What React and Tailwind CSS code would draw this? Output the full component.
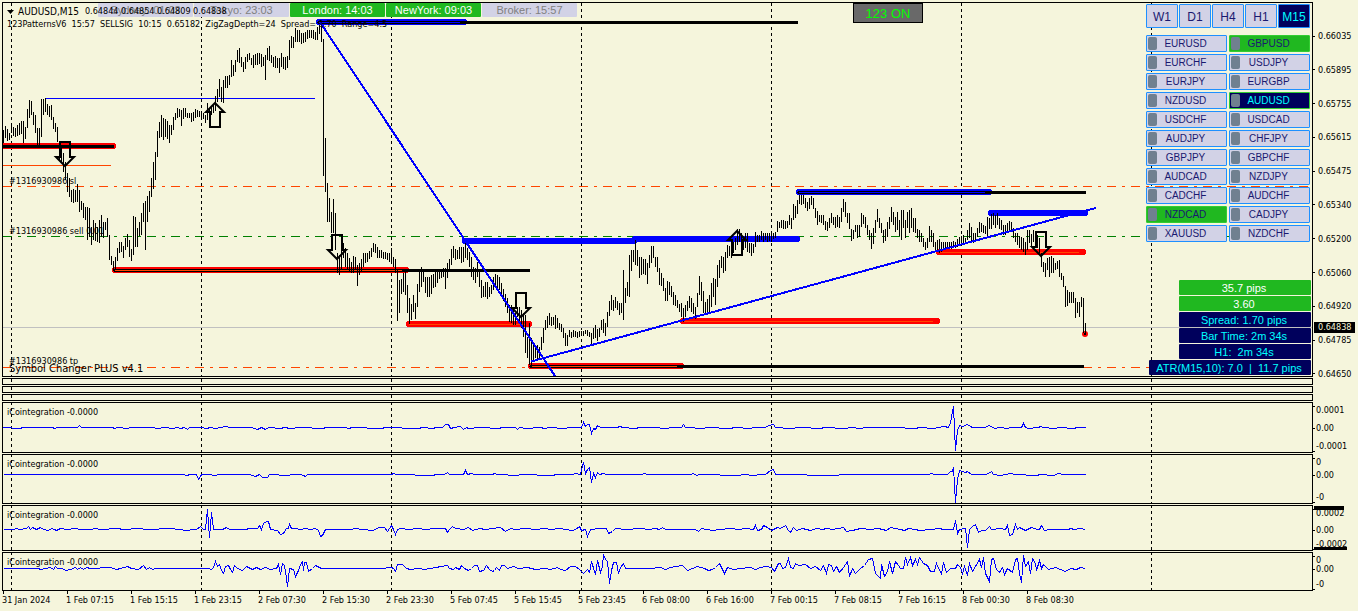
import React from "react";

const UI = "font-['DejaVu_Sans_Condensed','DejaVu_Sans',sans-serif]";
const BTN = "font-['Liberation_Sans',sans-serif]";

// Each run of bars starts at x and advances 2px a bar; v holds high,low pairs scaled by k below y0.
const RUNS = [
  {
    x: 3, y0: 0, k: 1,
    v: [130,143,126,138,129,141,133,140,124,133,127,136,128,137,125,136,123,135,121,134,121,143,127,139,109,128,100,118,101,115,112,125,115,133,128,145,128,146,99,137,99,115,98,112,104,115,106,117,105,120,117,129,123,132,127,142,142,160,147,162,153,172,162,180,173,192,178,197,190,202,189,203,190,202,184,202,190,212,201,210,203,218,207,220,207,240,208,237,227,245,220,240,223,241,227,242,220,243,215,237,222,238,222,230,218,237,235,260,256,265,261,270,257,270,248,261,242,253,242,252,246,258,238,250,234,247,240,257,249,261,216,255,217,247,228,247,222,236,213,235,203,222,201,250,196,222,191,212,178,197,162,189,152,180,131,157,122,138,115,137,118,140,119,137,121,139,125,143,125,135,117,130,113,120,108,118,109,117,110,126,108,119,108,117,113,118,113,118,113,122,112,121,109,118,110,117,111,117,113,118,113,119,115,123,103,120,108,117,107,115,105,113,96,111,89,102,79,97,87,102,80,103,76,88,76,88,75,85,60,77,65,76,60,72,50,62,48,63,57,67,62,72,57,69,54,62,53,60,58,65,55,68,54,65,53,65,53,64,54,67,57,66,55,80,48,60,46,61,55,63,57,67,56,68,58,68,58,73,53,67,57,69,57,70,56,68,40,60,36,48,37,48,28,42,30,42,30,42,33,44,33,43,32,42,30,39,30,38,30,38,30,39,32,40,27,40,25,34,27,42,39,176,138,192],
  },
  {
    x: 327, y0: 190, k: 1 / 3,
    v: [-20,97,25,97,67,130,28,130,68,180,190,250,195,255,150,240,160,205,175,230,190,238,205,245,215,250,197,248,200,240,225,288,220,255,207,245,190,232,190,220,188,215,183,207,175,200,158,187,162,190,172,205,180,205,180,203,187,207,187,207,190,210,188,215,175,222,200,230,207,250,240,393,270,370,267,313,250,305,240,315,285,370,325,403,343,390,315,365,340,387,283,350,245,307,230,290,240,275,260,310,262,320,262,320,255,313,252,293,245,290,240,280,245,267,240,265,235,262,235,297,220,263,208,245,177,225,167,205,178,210,180,208,170,208,170,220,170,215,155,205,175,210,185,230,200,262,230,270,235,280,215,262,245,290,270,323,287,320,275,320,275,328,290,320,285,312,262,300,252,290,255,297,262,300,280,320,297,333,312,350,325,370,345,395,345,400,350,405,370,405,350,380,350,395,360,415,370,440,375,490,440,503,400,525,445,530,465,513,470,505,465,510,470,503,440,480,415,458,390,420,377,413,368,405,382,408,380,405,375,418,383,415,400,420,403,425,415,445,430,468,435,467,420,440,425,445,420,440,422,440,425,445,422,442,422,435,422,437,420,433,420,437,427,440,430,465,415,447,405,445,418,453,415,440,390,420,388,430,400,437,365,410,333,377,315,360,330,362,322,355,332,360,340,375,338,370,240,390,293,340,277,317,195,320,180,243,180,215,150,225,180,228],
  },
  {
    x: 639, y0: 170, k: 1 / 3,
    v: [260,325,262,315,267,312,268,315,280,342,255,295,228,280,228,265,262,290,262,305,293,345,308,347,325,362,355,392,333,392,335,375,347,380,367,405,375,408,390,413,402,425,400,440,413,455,405,440,393,423,378,413,383,425,400,432,412,448,370,410,318,375,335,392,362,428,397,430,388,432,375,425,338,410,323,380,328,405,285,350,270,325,258,295,260,308,247,303,225,265,228,258,225,263,215,248,205,240,178,225,178,215,190,228,200,240,190,235,190,245,220,250,220,257,222,250,187,230,195,217,195,215,183,210,190,215,188,210,190,215,190,213,190,215,190,208,187,205,153,187,155,175,150,175,150,177,153,178,152,175,135,165,145,178,103,150,108,145,90,133,75,102,75,105,75,102,85,113,97,123,85,117,78,105,85,118,115,145,123,165,135,155,135,160,135,165,153,180,155,182,145,175,130,160,140,165,142,175,135,170,140,175,115,155,87,125,95,140,130,160,130,178,177,213,180,208,165,187,165,203,165,200,130,170,135,162,140,175,165,195,180,210,190,237,175,222,150,190,117,155,145,175,160,190,180,220,177,213,155,200,140,178,110,155,125,165,140,185,125,180,150,197,120,210,120,175,150,205,125,175,120,190,115,175,145,185,145,190,177,205,180,215,190,215,205,230,215,240,205,235,168,215,180,217,190,230,215,245,210,245,208,250,215,245,215,240,215,240,215,235,215,235,215,238,213,235,215,235,208,230,200,225,198,222,195,225,205,220,180,210,160,205,170,215,190,220,190,210,175,200],
  },
  {
    x: 979, y0: 170, k: 1 / 3,
    v: [155,190,160,185,165,190,168,192,140,203,143,178,133,178,130,165,135,175,130,165,143,178,150,180,165,195,165,195,160,187,153,180,155,185,175,205,190,215,190,225,197,235,200,240,205,245,215,255,180,240,180,220,193,232,180,215,185,230,195,235,205,250,250,290,275,305,280,320,265,300,262,320,258,310,265,310,278,300,272,297,270,320,308,330,317,350,347,410,360,408,365,400,365,398,365,400,385,445,395,430,395,440,380,410,383,490,460,490],
  },
];

const barPath = RUNS.map((r) => {
  let d = "";
  for (let i = 0; i < r.v.length; i += 2) {
    const hi = Math.round(r.y0 + r.v[i] * r.k);
    const lo = Math.round(r.y0 + r.v[i + 1] * r.k);
    d += `M${r.x + i + 0.5} ${hi}V${lo}`;
  }
  return d;
}).join("");

const SEPARATORS = [11, 201, 391, 581, 771, 961, 1151];

const LEVELS = [
  { x1: 319, x2: 464, end: 797, y: 22, c: "#0000ff", core: true, mid: "#0000ff" },
  { x1: 3, x2: 113, end: 113, y: 146, c: "#ff0000", core: true },
  { x1: 115, x2: 406, end: 529, y: 270, c: "#ff0000", core: true, mid: "#ff4500" },
  { x1: 409, x2: 529, y: 324, c: "#ff0000", mid: "#ff4500" },
  { x1: 531, x2: 681, end: 1083, y: 366, c: "#ff0000", core: true, mid: "#ff4500" },
  { x1: 683, x2: 937, y: 321, c: "#ff0000", mid: "#ff4500" },
  { x1: 939, x2: 1083, y: 252, c: "#ff0000", mid: "#ff4500" },
  { x1: 465, x2: 634, y: 241, c: "#0000ff" },
  { x1: 635, x2: 797, y: 239, c: "#0000ff" },
  { x1: 799, x2: 989, end: 1085, y: 192, c: "#0000ff", core: true, mid: "#0000ff" },
  { x1: 991, x2: 1085, y: 213, c: "#0000ff" },
];

const ARROWS = [
  { x: 65, y: 166, down: true },
  { x: 337, y: 259, down: true },
  { x: 521, y: 317, down: true },
  { x: 1041, y: 256, down: true },
  { x: 215, y: 103 },
  { x: 737, y: 231 },
];

const COINTEGRATION = [
  {
    height: "h-[51px]", top: 402, base: 427.5,
    labels: [{ t: "0.0001", y: 8 }, { t: "0.00", y: 26 }, { t: "-0.0001", y: 44 }],
    v: [3,0,20,1,22,0,52,0,54,1,57,0,77,0,79,-2,81,0,112,0,114,1,117,0,127,1,130,0,150,0,158,1,164,0,172,1,177,0,180,1,184,0,187,2,189,0,200,0,206,1,210,0,215,1,220,0,225,-1,230,0,245,0,251,0,257,2,261,0,265,2,268,0,280,1,284,0,290,1,300,0,322,1,326,0,345,0,348,1,352,0,381,1,385,0,418,1,422,0,432,1,436,0,442,0,445,-3,448,-3,450,1,454,0,460,-1,463,2,466,0,468,1,480,0,498,1,502,0,515,0,517,2,519,0,526,1,540,0,544,1,550,0,563,1,570,0,581,0,583,-5,585,-1,587,-3,589,-3,591,6,593,1,595,2,597,-2,600,0,616,0,620,-1,622,0,634,1,640,0,651,0,667,1,670,0,681,0,683,-3,685,0,703,1,706,0,730,1,734,0,750,1,753,0,765,0,768,-2,773,-3,775,0,790,1,800,0,820,1,824,0,845,1,850,0,860,1,865,0,895,0,914,1,920,0,933,1,938,0,944,-1,948,0,950,-5,953,-21,955,23,957,3,959,-2,962,-1,967,-3,970,-1,972,0,985,0,988,-2,991,-1,994,1,1000,0,1006,1,1012,0,1021,0,1023,-4,1025,0,1028,1,1038,0,1040,-1,1043,0,1053,1,1060,0,1072,1,1078,0,1085,0],
  },
  {
    height: "h-[50px]", top: 454, base: 474.5,
    labels: [{ t: "0", y: 8 }, { t: "0.00", y: 21 }, { t: "-0", y: 43 }],
    v: [3,0,183,0,186,1,190,0,196,0,198,5,200,2,201,0,210,0,213,1,220,0,240,0,249,0,255,2,259,0,262,3,267,3,269,0,287,1,292,0,300,0,303,1,305,2,307,0,391,0,393,-1,396,0,432,1,436,0,444,0,447,-2,449,0,463,0,465,-4,467,0,471,-1,474,0,492,0,494,-1,497,0,517,1,520,0,552,1,556,0,572,0,575,-1,580,0,583,-12,585,-1,587,-5,589,-7,591,8,593,-1,595,3,597,-2,599,0,603,-1,606,0,641,0,644,-1,647,0,670,0,690,0,693,-1,696,1,699,0,739,1,742,0,755,1,758,0,765,0,770,-4,773,-5,775,0,837,1,840,0,928,0,931,-1,934,0,947,0,950,-3,952,-3,953,-7,955,28,957,5,959,-4,962,-3,965,-2,967,-3,971,0,985,0,988,-1,991,-3,993,0,1000,1,1005,0,1010,-1,1015,0,1036,1,1040,0,1053,1,1058,-1,1063,0,1085,0],
  },
  {
    height: "h-[46px]", top: 505, base: 529.5,
    labels: [{ t: "0.0002", y: 8 }, { t: "0.00", y: 25 }, { t: "-0.0002", y: 39 }],
    tags: true,
    v: [3,0,14,0,15,-1,20,0,26,-1,28,-3,30,0,32,-2,36,0,40,-2,43,0,48,1,51,-1,54,0,56,1,60,-1,67,0,75,-1,80,0,90,0,95,-1,100,0,118,-1,122,0,140,-1,145,0,172,-1,177,0,187,1,192,0,196,0,200,-3,203,0,205,0,207,-20,209,8,211,-17,213,0,222,0,226,-2,229,0,245,0,249,-1,257,-1,259,-4,261,0,263,-6,266,-8,268,-8,270,0,277,1,280,5,283,4,286,-1,288,-1,289,-5,291,-1,295,-1,300,0,305,-1,310,0,315,-1,318,1,320,7,322,6,325,0,350,0,355,-1,362,0,373,1,378,-2,384,-2,387,2,391,-4,393,0,395,5,397,0,400,-1,408,0,418,-1,425,0,435,-1,445,-1,447,3,449,0,452,-3,455,-1,463,0,468,-2,472,1,479,-1,485,0,492,-1,500,-2,505,2,510,-1,515,0,525,-1,535,0,545,-1,550,0,560,-1,565,0,572,1,575,0,579,-3,581,1,585,0,587,7,590,0,600,-1,606,-1,608,4,612,2,615,-1,625,0,640,-1,648,0,655,-1,659,0,662,-2,665,0,695,0,698,2,701,-1,712,1,720,0,730,-1,738,0,745,-1,753,0,755,-4,757,1,761,0,763,-4,767,-2,771,1,777,-2,780,-1,785,-4,788,1,790,3,793,-2,796,1,802,-1,810,1,816,-1,822,0,826,-1,832,0,843,-2,846,2,852,1,860,-1,870,0,878,-1,886,1,890,-2,895,-1,900,0,904,1,908,-1,914,0,920,1,930,0,939,-1,943,0,953,0,955,-9,957,4,959,0,965,-1,967,18,969,0,972,-3,975,-5,978,3,981,1,985,1,989,-3,991,0,1000,-1,1005,0,1007,-4,1009,6,1012,5,1015,-5,1017,0,1019,-2,1025,1,1031,-2,1037,0,1039,0,1041,-4,1044,1,1050,0,1068,0,1070,-1,1074,0,1080,-1,1085,0],
  },
  {
    height: "h-[39px]", top: 552, base: 568.5,
    labels: [{ t: "0", y: 8 }, { t: "0.00", y: 17 }, { t: "-0", y: 32 }],
    v: [3,0,38,0,40,1,45,0,50,-1,53,1,55,-2,57,0,62,0,65,2,70,1,75,-1,77,1,80,-1,83,1,86,-1,90,0,110,-1,116,1,120,0,127,-2,131,0,138,1,143,-3,146,1,149,-1,152,1,155,0,208,0,211,1,213,-1,215,-7,217,-2,219,-4,221,2,223,5,225,-2,228,-3,230,1,232,4,234,-3,237,0,242,2,246,-2,252,1,256,-1,260,1,265,-1,270,1,276,0,278,-4,280,6,282,-5,284,-3,286,10,287,18,289,0,293,1,295,8,298,2,300,-4,302,-7,303,2,304,-6,306,-6,308,3,312,0,315,-3,319,-1,321,0,383,0,388,-1,391,-1,393,0,395,3,397,-4,402,-4,406,0,410,1,418,0,424,1,430,0,436,-1,440,-2,447,-3,449,0,453,1,455,-1,459,1,461,-3,464,0,468,2,471,0,474,-3,477,-3,479,3,483,2,486,-3,489,1,492,3,494,2,496,-1,499,2,501,-3,504,-3,507,0,513,-2,518,0,527,-1,535,1,545,0,550,1,557,-1,560,1,565,2,570,-2,575,-2,579,1,583,5,587,1,589,4,591,-7,595,6,597,-8,600,4,602,-2,603,-14,605,-9,607,-7,609,15,611,2,613,-6,616,-6,618,5,620,-1,623,-5,625,0,650,0,660,-1,665,1,670,-1,682,-3,687,2,697,-2,704,0,708,2,712,1,715,-1,719,-5,724,5,727,-1,733,1,740,0,750,-1,755,1,760,-1,766,-2,771,-1,774,3,778,-5,780,-5,782,0,785,-1,788,-10,790,-1,793,0,795,-5,798,-3,805,-4,810,0,815,-2,820,2,823,-3,826,5,828,-4,831,-3,833,3,836,-2,839,4,843,-1,847,-7,849,8,852,0,855,5,860,0,864,-3,868,-9,872,-10,875,5,878,8,880,10,881,-4,884,8,887,3,889,-7,892,5,895,-7,898,-3,900,0,903,0,905,-11,907,-4,910,-11,912,-3,915,-9,917,-4,919,-11,923,-5,927,-3,930,3,934,3,936,-5,938,0,941,5,943,-6,946,4,950,0,955,0,957,-4,960,-1,962,5,964,-2,967,7,969,-5,972,3,975,-2,979,-9,981,-1,983,-11,985,5,989,13,991,-9,993,-10,996,1,999,4,1002,-1,1004,6,1007,0,1012,4,1015,-9,1017,-10,1019,5,1021,14,1023,-13,1025,-2,1028,-7,1030,5,1032,-10,1035,-5,1036,2,1039,-8,1041,0,1043,-4,1048,1,1055,-1,1060,1,1065,3,1070,0,1076,1,1080,-1,1085,0],
  },
];

const PRICES = ["0.66035", "0.65895", "0.65755", "0.65615", "0.65475", "0.65340", "0.65200", "0.65060", "0.64920", "0.64785", "0.64650"];

const TIMES = ["31 Jan 2024", "1 Feb 07:15", "1 Feb 15:15", "1 Feb 23:15", "2 Feb 07:30", "2 Feb 15:30", "2 Feb 23:30", "5 Feb 07:45", "5 Feb 15:45", "5 Feb 23:45", "6 Feb 08:00", "6 Feb 16:00", "7 Feb 00:15", "7 Feb 08:15", "7 Feb 16:15", "8 Feb 00:30", "8 Feb 08:30"];

const PAIRS = ["EURUSD", "GBPUSD", "EURCHF", "USDJPY", "EURJPY", "EURGBP", "NZDUSD", "AUDUSD", "USDCHF", "USDCAD", "AUDJPY", "CHFJPY", "GBPJPY", "GBPCHF", "AUDCAD", "NZDJPY", "CADCHF", "AUDCHF", "NZDCAD", "CADJPY", "XAUUSD", "NZDCHF"];

const SESSIONS = [
  { t: "Sydney: 01:03" },
  { t: "Tokyo: 23:03" },
  { t: "London: 14:03", open: true },
  { t: "NewYork: 09:03", open: true },
  { t: "Broker: 15:57" },
];

const INFO = [
  { t: "35.7 pips", up: true },
  { t: "3.60", up: true },
  { t: "Spread: 1.70 pips" },
  { t: "Bar Time: 2m 34s" },
  { t: "H1:  2m 34s" },
];

function Separators({ top, bottom }) {
  return SEPARATORS.map((x) => (
    <path key={x} d={`M${x + 0.5} ${top}V${bottom}`} stroke="#000" strokeDasharray="3 3" />
  ));
}

function Arrow({ x, y, down }) {
  const s = down ? -1 : 1;
  return (
    <path
      d={`M${x} ${y}L${x + 9} ${y + 9 * s}H${x + 5}V${y + 24 * s}H${x - 5}V${y + 9 * s}H${x - 9}Z`}
      fill="none"
      stroke="#000"
      strokeWidth="2"
      shapeRendering="auto"
    />
  );
}

function Level({ x1, x2, end, y, c, core, mid }) {
  const yc = y + 0.5;
  return (
    <g>
      <path d={`M${x1} ${y}H${x2}`} stroke={c} strokeWidth="6" strokeLinecap="round" />
      {core && <path d={`M${x1} ${yc}H${end}`} stroke="#000" strokeWidth="3" strokeLinecap="round" />}
      {mid && <path d={`M${x1} ${yc}H${x2 - 4}`} stroke={mid} />}
    </g>
  );
}

function PriceChart() {
  return (
    <svg className="block h-full w-full" shapeRendering="crispEdges" fill="none" aria-hidden="true">
      <g transform="translate(-3 -3)">
        <Separators top={3} bottom={376} />
        <path d="M3 327.5H4000" stroke="#c0c0c0" />
        <path d="M3 186.5H4000M3 367.5H4000" stroke="#ff4500" strokeDasharray="9 6 3 6" />
        <path d="M3 236.5H4000" stroke="#008000" strokeDasharray="9 6 3 6" />
        <path d="M45 98.5H315" stroke="#0000ff" />
        <path d="M3 165.5H111" stroke="#ff4500" />
        {LEVELS.map((l) => (
          <Level key={`${l.x1}-${l.y}`} {...l} />
        ))}
        <circle cx="1085" cy="334" r="3" fill="#ff0000" shapeRendering="auto" />
        <circle cx="1085" cy="334" r="1.5" fill="#000" />
        <path d={barPath} stroke="#000" />
        <path d="M320 22L555 376M531 361.5L1086 210.5L1096 208" stroke="#0000ff" strokeWidth="2" />
        {ARROWS.map((a) => (
          <Arrow key={a.x} {...a} />
        ))}
      </g>
    </svg>
  );
}

function IndicatorPane({ height, top, base, labels, tags, v }) {
  const pts = [];
  for (let i = 0; i < v.length; i += 2) pts.push(`${v[i] + 0.5},${base + v[i + 1]}`);
  return (
    <div className={`flex ${height}`}>
      <div className="relative min-w-0 flex-1 border border-black">
        <svg className="block h-full w-full" shapeRendering="crispEdges" fill="none" aria-hidden="true">
          <g transform={`translate(-3 ${-top - 1})`}>
            <Separators top={top} bottom={top + 60} />
            <polyline points={pts.join(" ")} stroke="#0000ff" />
          </g>
        </svg>
        <span className={`absolute left-1 top-[3px] text-[9px] leading-3 ${UI}`}>iCointegration -0.0000</span>
      </div>
      <div className={`relative w-[45px] overflow-hidden text-[9px] leading-3 ${UI}`}>
        {labels.map((l) => (
          <span key={l.t + l.y} className="absolute left-[3px]" style={{ top: l.y - 6 }}>
            {l.t}
          </span>
        ))}
        <span className="absolute left-0 top-1 h-px w-[2px] bg-black" />
        <span className="absolute left-0 h-px w-[2px] bg-black" style={{ top: labels[1].y }} />
        <span className="absolute bottom-px left-0 h-px w-[2px] bg-black" />
        {tags && <span className="absolute left-px top-px h-1 w-[30px] bg-black" />}
        {tags && <span className="absolute bottom-px left-px h-[3px] w-[33px] bg-black" />}
      </div>
    </div>
  );
}

function pairStyle(p) {
  if (p === "AUDUSD") return "border-[#32cd32] bg-[#00005c] text-[#00ffff]";
  if (p === "GBPUSD" || p === "NZDCAD") return "border-[#32cd32] bg-[#20b820] text-[#191970]";
  return "border-[#1e90ff] bg-[#d2d2e6] text-[#191970]";
}

function SymbolPanel() {
  return (
    <div className={`absolute right-[2px] top-px flex w-[164px] flex-col gap-[7px] ${BTN}`}>
      <div className="grid grid-cols-5 gap-px">
        {["W1", "D1", "H4", "H1", "M15"].map((t) => (
          <button
            key={t}
            type="button"
            className={`h-6 rounded-[1px] border border-[#1e90ff] pt-px text-[12px] leading-none ${t === "M15" ? "bg-[#00005c] text-[#00ffff]" : "bg-[#d2d2e6] text-[#191970]"}`}
          >
            {t}
          </button>
        ))}
      </div>
      <div className="grid grid-cols-2 gap-[2px]">
        {PAIRS.map((p) => (
          <button
            key={p}
            type="button"
            className={`relative h-[17px] rounded-[1px] border pr-[2px] pt-px text-[10px] leading-none ${pairStyle(p)}`}
          >
            <span className="absolute left-px top-px h-[13px] w-[9px] rounded-[2px] bg-[#708090]" />
            {p}
          </button>
        ))}
      </div>
    </div>
  );
}

function InfoPanel() {
  return (
    <div className={`absolute bottom-px right-px flex flex-col items-end gap-px text-center text-[11px] leading-[17px] ${BTN}`}>
      {INFO.map((r) => (
        <div
          key={r.t}
          className={`h-[15px] w-[132px] whitespace-pre rounded-[1px] pr-[2px] ${r.up ? "bg-[#20b820] text-white" : "bg-[#00005c] text-[#00ffff]"}`}
        >
          {r.t}
        </div>
      ))}
      <div className="h-[15px] w-[162px] whitespace-pre rounded-[1px] bg-[#00005c] pr-[2px] text-[#00ffff]">
        {"ATR(M15,10): 7.0  |  11.7 pips"}
      </div>
    </div>
  );
}

export default function App() {
  return (
    <main className="flex min-h-screen flex-col gap-px overflow-hidden bg-[#f5f5dc] pl-[2px] pt-[2px] text-black">
      <section className="flex h-[375px]">
        <div className="relative min-w-0 flex-1 border border-black">
          <PriceChart />
          <div className={`absolute left-[95px] top-0 flex gap-px text-center text-[11px] leading-[15px] ${BTN}`}>
            {SESSIONS.map((s) => (
              <div
                key={s.t}
                className={`h-[14px] w-[95px] rounded-[1px] ${s.open ? "bg-[#20b820] text-white" : "bg-[#d2d2e6] text-[#808080]"}`}
              >
                {s.t}
              </div>
            ))}
          </div>
          <div className={`absolute left-1 top-[2px] whitespace-pre text-[9px] leading-[13px] ${UI}`}>
            <h1 className="flex items-center">
              <svg width="7" height="4" viewBox="0 0 7 4" aria-hidden="true">
                <path d="M0 0H7L3.5 4Z" fill="#000" />
              </svg>
              <span className="ml-1 mr-[6px] text-[10px]">AUDUSD,M15</span>
              <span>0.64844 0.64854 0.64809 0.64838</span>
            </h1>
            <p>{"123PatternsV6  15:57  SELLSIG  10:15  0.65182  ZigZagDepth=24  Spread= 1.70  Range=4.5"}</p>
          </div>
          <span className={`absolute left-[6px] top-[172px] text-[9px] leading-3 ${UI}`}>#1316930986 sl</span>
          <span className={`absolute left-[6px] top-[222px] text-[9px] leading-3 ${UI}`}>#1316930986 sell 0.01</span>
          <span className={`absolute left-[6px] top-[352px] text-[9px] leading-3 ${UI}`}>#1316930986 tp</span>
          <span className={`absolute left-[6px] top-[360px] text-[11px] leading-3 ${UI}`}>Symbol Changer PLUS v4.1</span>
          <button
            type="button"
            className={`absolute left-[850px] top-0 h-5 w-[70px] border border-black bg-[#696969] text-[13px] leading-none text-[#00ff00] ${BTN}`}
          >
            123 ON
          </button>
          <SymbolPanel />
          <InfoPanel />
        </div>
        <div className={`relative -mb-1 flex w-[45px] flex-col justify-between pb-px pt-7 text-[9px] leading-3 ${UI}`}>
          {PRICES.map((p) => (
            <div key={p} className="flex items-center gap-[3px]">
              <span className="h-px w-[2px] bg-black" />
              {p}
            </div>
          ))}
          <span className="absolute left-px top-80 h-[11px] w-[41px] bg-black pl-1 leading-[11px] text-[#f5f5dc]">0.64838</span>
        </div>
      </section>
      {[0, 1, 2].map((i) => (
        <div key={i} className="mr-[45px] h-[7px] border border-black">
          <svg className="block h-full w-full" shapeRendering="crispEdges" aria-hidden="true">
            <g transform="translate(-3 0)">
              <Separators top={0} bottom={8} />
            </g>
          </svg>
        </div>
      ))}
      {COINTEGRATION.map((c) => (
        <IndicatorPane key={c.top} {...c} />
      ))}
      <div className={`-mt-px flex overflow-hidden text-[9px] leading-3 ${UI}`}>
        {TIMES.map((t) => (
          <div key={t} className="w-16 shrink-0 whitespace-nowrap">
            <span className="ml-px block h-[3px] w-px bg-black" />
            {t}
          </div>
        ))}
      </div>
    </main>
  );
}
